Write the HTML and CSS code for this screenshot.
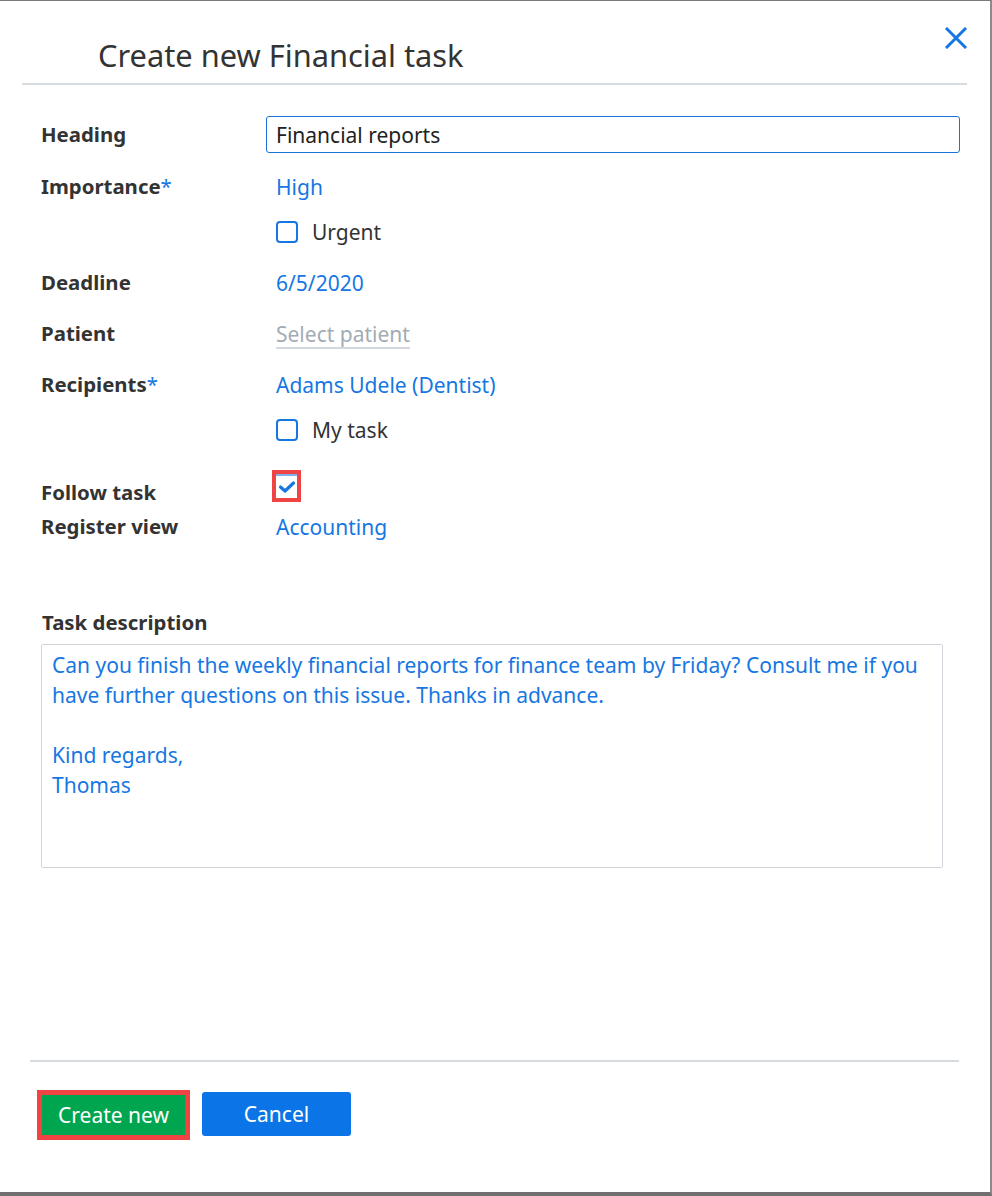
FILE: index.html
```html
<!DOCTYPE html>
<html lang="en">
<head>
<meta charset="utf-8">
<title>Create new Financial task</title>
<link rel="stylesheet" href="styles.css">
</head>
<body>
<div class="dialog">
  <div class="header">
    <h1 class="title">Create new Financial task</h1>
    <button class="close" aria-label="Close">
      <svg width="22" height="22" viewBox="0 0 22 22"><path d="M2 2 L20 20 M20 2 L2 20" stroke="#1677e2" stroke-width="3" stroke-linecap="square" fill="none"/></svg>
    </button>
  </div>
  <div class="body">
    <div class="form">
      <div class="row row-heading">
        <div class="label">Heading</div>
        <div class="value"><input class="input" type="text" value="Financial reports"></div>
      </div>
      <div class="row">
        <div class="label">Importance<span class="req">*</span></div>
        <div class="value stack">
          <span class="link">High</span>
          <label class="check"><span class="box"></span><span>Urgent</span></label>
        </div>
      </div>
      <div class="row">
        <div class="label">Deadline</div>
        <div class="value"><span class="link">6/5/2020</span></div>
      </div>
      <div class="row">
        <div class="label">Patient</div>
        <div class="value"><span class="placeholder">Select patient</span></div>
      </div>
      <div class="row">
        <div class="label">Recipients<span class="req">*</span></div>
        <div class="value stack">
          <span class="link">Adams Udele (Dentist)</span>
          <label class="check"><span class="box"></span><span>My task</span></label>
        </div>
      </div>
      <div class="pair">
        <div class="row row-follow">
          <div class="label">Follow task</div>
          <div class="value">
            <span class="box checked">
              <svg width="18" height="14" viewBox="0 0 18 14"><path d="M2.5 7 L7 11 L15.5 3" stroke="#1677e2" stroke-width="3.2" fill="none" stroke-linecap="round" stroke-linejoin="round"/></svg>
            </span>
          </div>
        </div>
        <div class="row">
          <div class="label">Register view</div>
          <div class="value"><span class="link">Accounting</span></div>
        </div>
      </div>
    </div>
    <div class="desc">
      <div class="desc-label">Task description</div>
      <div class="textarea">Can you finish the weekly financial reports for finance team by Friday? Consult me if you have further questions on this issue. Thanks in advance.<br><br>Kind regards,<br>Thomas</div>
    </div>
  </div>
  <div class="footer">
    <button class="btn btn-green">Create new</button>
    <button class="btn btn-blue">Cancel</button>
  </div>
</div>
</body>
</html>
```
FILE: styles.css
```css
html, body {
  margin: 0;
  padding: 0;
  background: #ffffff;
}
body {
  font-family: "Noto Sans", "Open Sans", sans-serif;
  color: #333333;
}
.dialog {
  box-sizing: border-box;
  width: 992px;
  height: 1196px;
  border-top: 1px solid #7b7b7b;
  border-right: 2px solid #8a8a8a;
  border-bottom: 4px solid #6f6f6f;
  display: flex;
  flex-direction: column;
  background: #fff;
}
.header {
  margin: 0 23px 0 22px;
  height: 82px;
  border-bottom: 2px solid #d6dbdf;
  display: flex;
  justify-content: space-between;
  align-items: flex-start;
}
.title {
  margin: 0;
  padding: 33px 0 0 76px;
  font-size: 30.8px;
  font-weight: 400;
  line-height: 42px;
  color: #333;
}
.close {
  margin-top: 26px;
  padding: 0;
  border: 0;
  background: none;
  width: 22px;
  height: 22px;
  display: block;
}
.close svg { display: block; }
.body {
  flex: 1;
  display: flex;
  flex-direction: column;
}
.form {
  padding: 31px 30px 0 41px;
  display: flex;
  flex-direction: column;
  gap: 17px;
}
.row {
  display: flex;
  align-items: flex-start;
  font-size: 21px;
}
.label {
  flex: 0 0 225px;
  line-height: 32px;
  font-size: 20.4px;
  font-weight: 700;
  color: #333;
}
.row-heading .label { line-height: 37px; padding-top: 0; }
.req { color: #1677e2; font-weight: 400; }
.value {
  flex: 1;
  line-height: 34px;
  padding-left: 10px;
}
.row-heading .value { padding-left: 0; }
.stack {
  display: flex;
  flex-direction: column;
  gap: 11px;
  align-items: flex-start;
}
.input {
  box-sizing: border-box;
  width: 694px;
  height: 37px;
  border: 1px solid #1a73d9;
  border-radius: 3px;
  padding: 0 9px;
  font-family: inherit;
  font-size: 21px;
  color: #222;
  outline: none;
}
.link { color: #1677e2; }
.placeholder {
  color: #a3abb4;
  border-bottom: 2px solid #d3d9df;
  line-height: 25px;
  display: inline-block;
}
.check {
  display: flex;
  align-items: center;
  gap: 14px;
  color: #333;
}
.box {
  box-sizing: border-box;
  width: 22px;
  height: 22px;
  border: 2px solid #1677e2;
  border-radius: 4px;
  background: #fff;
  display: inline-block;
}
.pair {
  margin-top: 11px;
  display: flex;
  flex-direction: column;
}
.row-follow { height: 35px; }
.row-follow .label { padding-top: 1px; }
.row-follow .value {
  display: flex;
  align-items: flex-start;
}
.box.checked {
  display: flex;
  align-items: center;
  justify-content: center;
  width: 21px;
  height: 24px;
  border: 0;
  border-top: 2px solid #7fb0ea;
  border-radius: 0;
  outline: 4px solid #f04343;
  margin-top: -1px;
}
.desc {
  padding: 61px 47px 0 41px;
}
.desc-label {
  font-size: 20.4px;
  font-weight: 700;
  line-height: 34px;
  padding-left: 1px;
  margin-bottom: 5px;
}
.textarea {
  box-sizing: border-box;
  height: 224px;
  border: 1px solid #cfd5db;
  border-radius: 2px;
  padding: 5px 10px;
  font-size: 21px;
  line-height: 30px;
  color: #1677e2;
}
.footer {
  margin: 0 31px 0 30px;
  border-top: 2px solid #d6dbdf;
  height: 132px;
  box-sizing: border-box;
  padding: 30px 0 0 12px;
  display: flex;
  align-items: flex-start;
  gap: 17px;
}
.btn {
  font-family: inherit;
  font-size: 21px;
  color: #fff;
  border: 0;
  cursor: pointer;
}
.btn-green {
  background: #00a64f;
  width: 143px;
  height: 40px;
  margin-top: 3px;
  outline: 5px solid #f04343;
  border-radius: 0;
}
.btn-blue {
  background: #0b74e6;
  width: 149px;
  height: 44px;
  border-radius: 3px;
}
```
